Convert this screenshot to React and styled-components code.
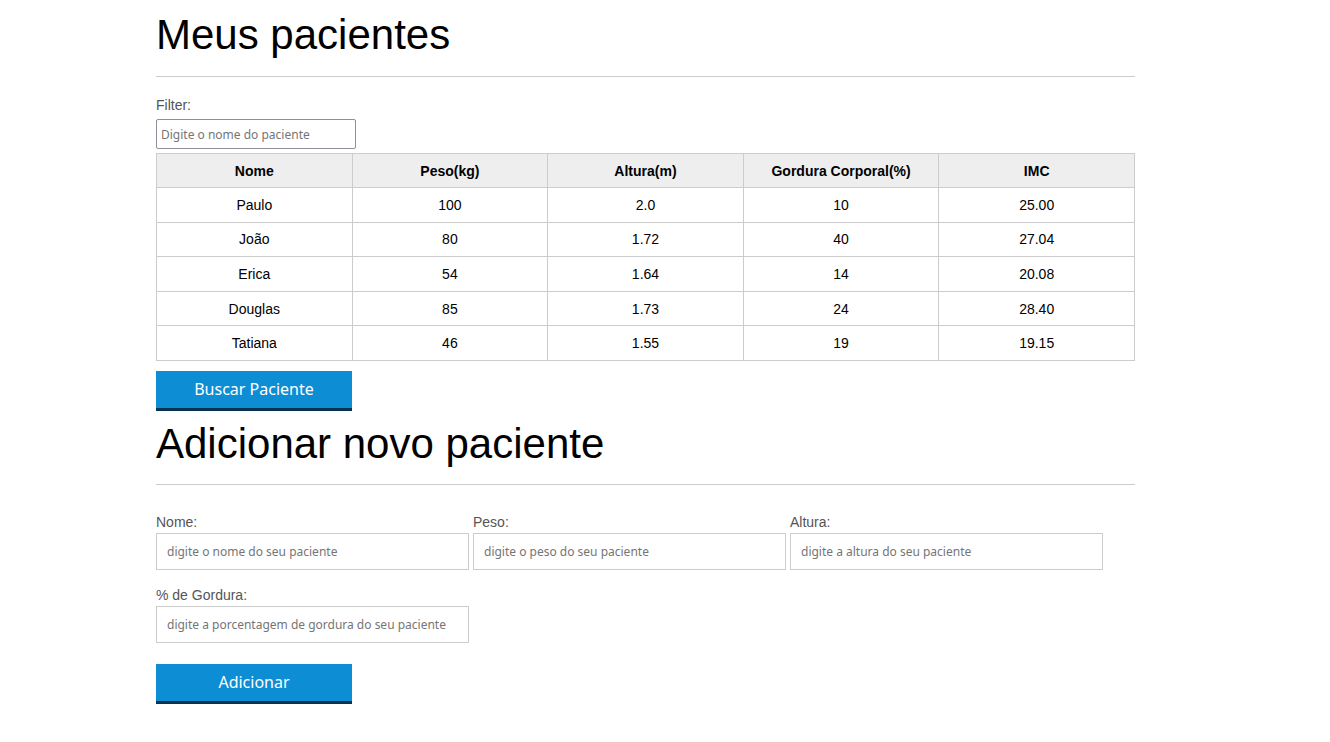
import React, { useState } from "react";
import styled, { createGlobalStyle } from "styled-components";

const GlobalStyle = createGlobalStyle`
  body {
    margin: 0;
    background: #fff;
    font-family: "Liberation Sans", Arial, sans-serif;
    color: #000;
  }
`;

const Container = styled.main`
  width: 979px;
  margin-left: 156px;
`;

const Title = styled.h1`
  font-size: 42px;
  font-weight: normal;
  line-height: 48px;
  margin: ${(p) => (p.$second ? "9px 0 0" : "11px 0 0")};
`;

const Rule = styled.hr`
  border: 0;
  border-top: 1px solid #ccc;
  margin: ${(p) => (p.$second ? "16px 0 0" : "17px 0 0")};
`;

const FilterLabel = styled.label`
  display: block;
  margin-top: 20px;
  font-size: 14px;
  color: #555;
  line-height: 16px;
`;

const FilterInput = styled.input`
  display: block;
  box-sizing: border-box;
  width: 200px;
  height: 30px;
  margin-top: 6px;
  padding: 0 4px;
  border: 1px solid #8f8f9d;
  border-radius: 2px;
  font-family: "Noto Sans", sans-serif;
  font-size: 12px;
  &::placeholder {
    color: #757575;
  }
`;

const Table = styled.table`
  width: 100%;
  margin-top: 4px;
  border-collapse: collapse;
  table-layout: fixed;
  font-size: 14px;
`;

const Th = styled.th`
  background: #eee;
  border: 1px solid #ccc;
  height: 33px;
  padding: 0;
  font-weight: bold;
  text-align: center;
`;

const Td = styled.td`
  border: 1px solid #ccc;
  height: 33.6px;
  padding: 0;
  text-align: center;
`;

const Button = styled.button`
  display: block;
  box-sizing: border-box;
  width: 196px;
  height: 40px;
  margin-top: ${(p) => p.$top || "10px"};
  padding: 0;
  background: #0d8dd4;
  color: #fff;
  border: 0;
  border-bottom: 3px solid #04344f;
  font-family: "Noto Sans", sans-serif;
  font-size: 16px;
  cursor: pointer;
`;

const Form = styled.form`
  margin-top: 29px;
`;

const Row = styled.div`
  display: flex;
  gap: 4px;
  margin-bottom: ${(p) => p.$gap || "17px"};
`;

const Field = styled.div`
  display: flex;
  flex-direction: column;
  width: 313px;
`;

const FieldLabel = styled.label`
  font-size: 14px;
  color: #555;
  line-height: 16px;
  margin-bottom: 3px;
`;

const FieldInput = styled.input`
  box-sizing: border-box;
  height: 37px;
  padding: 0 10px;
  border: 1px solid #ccc;
  font-family: "Noto Sans", sans-serif;
  font-size: 12px;
  &::placeholder {
    color: #757575;
  }
`;

const pacientes = [
  { nome: "Paulo", peso: "100", altura: "2.0", gordura: "10", imc: "25.00" },
  { nome: "João", peso: "80", altura: "1.72", gordura: "40", imc: "27.04" },
  { nome: "Erica", peso: "54", altura: "1.64", gordura: "14", imc: "20.08" },
  { nome: "Douglas", peso: "85", altura: "1.73", gordura: "24", imc: "28.40" },
  { nome: "Tatiana", peso: "46", altura: "1.55", gordura: "19", imc: "19.15" },
];

const App = () => {
  const [filtro, setFiltro] = useState("");

  const handleFiltro = (event) => {
    setFiltro(event.target.value);
  };

  const lista = pacientes.filter((p) =>
    p.nome.toLowerCase().includes(filtro.toLowerCase())
  );

  return (
    <Container>
      <GlobalStyle />
      <Title>Meus pacientes</Title>
      <Rule />
      <FilterLabel htmlFor="filtro">Filter:</FilterLabel>
      <FilterInput
        id="filtro"
        type="text"
        placeholder="Digite o nome do paciente"
        value={filtro}
        onChange={handleFiltro}
      />
      <Table>
        <thead>
          <tr>
            <Th>Nome</Th>
            <Th>Peso(kg)</Th>
            <Th>Altura(m)</Th>
            <Th>Gordura Corporal(%)</Th>
            <Th>IMC</Th>
          </tr>
        </thead>
        <tbody>
          {lista.map((p) => (
            <tr key={p.nome}>
              <Td>{p.nome}</Td>
              <Td>{p.peso}</Td>
              <Td>{p.altura}</Td>
              <Td>{p.gordura}</Td>
              <Td>{p.imc}</Td>
            </tr>
          ))}
        </tbody>
      </Table>
      <Button type="button">Buscar Paciente</Button>

      <Title $second>Adicionar novo paciente</Title>
      <Rule $second />
      <Form onSubmit={(e) => e.preventDefault()}>
        <Row>
          <Field>
            <FieldLabel>Nome:</FieldLabel>
            <FieldInput type="text" placeholder="digite o nome do seu paciente" />
          </Field>
          <Field>
            <FieldLabel>Peso:</FieldLabel>
            <FieldInput type="text" placeholder="digite o peso do seu paciente" />
          </Field>
          <Field>
            <FieldLabel>Altura:</FieldLabel>
            <FieldInput type="text" placeholder="digite a altura do seu paciente" />
          </Field>
        </Row>
        <Row $gap="21px">
          <Field>
            <FieldLabel>% de Gordura:</FieldLabel>
            <FieldInput
              type="text"
              placeholder="digite a porcentagem de gordura do seu paciente"
            />
          </Field>
        </Row>
        <Button type="submit" $top="0">Adicionar</Button>
      </Form>
    </Container>
  );
};

export default App;
